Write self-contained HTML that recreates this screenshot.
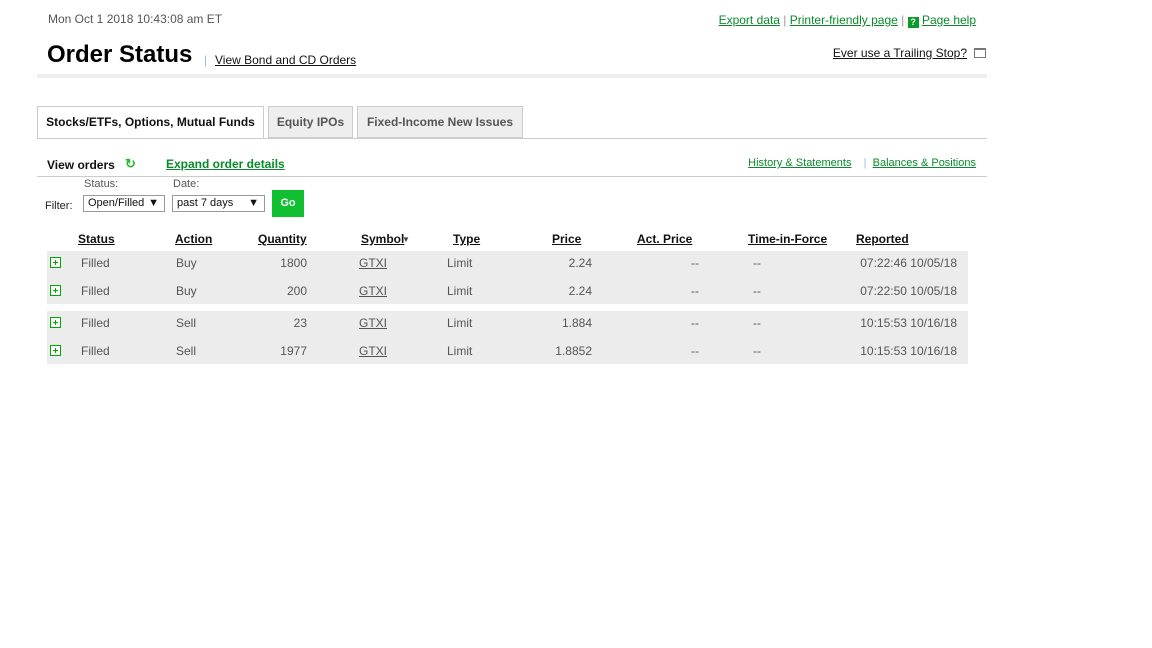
<!DOCTYPE html>
<html><head><meta charset="utf-8"><style>
body{margin:0;width:1152px;height:648px;background:#fff;font-family:"Liberation Sans",Arial,sans-serif;font-size:12px;color:#333;position:relative;overflow:hidden}
.a{position:absolute;white-space:nowrap}
.g{color:#0a8a2a;text-decoration:underline}
.k{color:#111;text-decoration:underline}
.h{color:#111;text-decoration:underline;font-weight:bold;font-size:12px}
.r{text-align:right}
.c{color:#555}
.tab{position:absolute;top:106px;height:32px;box-sizing:border-box;border:1px solid #ccc;font-weight:bold;font-size:12px;line-height:30px;text-align:center}
.plus{position:absolute;left:50px;width:9px;height:9px;border:1px solid #0a0;background:#fff}
.plus:before{content:"";position:absolute;left:2px;top:4px;width:5px;height:1px;background:#0a0}
.plus:after{content:"";position:absolute;left:4px;top:2px;width:1px;height:5px;background:#0a0}
.sel{position:absolute;top:195px;height:15px;border:1px solid #999;font-size:11px;line-height:15px;padding-left:4px;box-sizing:content-box;color:#111}
</style></head><body>
<div class="a c" style="left:48px;top:12px;font-size:12px">Mon Oct 1 2018 10:43:08 am ET</div>
<div class="a" style="right:176px;top:13px;font-size:12px;color:#999"><span class="g">Export data</span> | <span class="g">Printer-friendly page</span> | <span style="display:inline-block;width:11px;height:11px;background:#0a9a2a;color:#fff;font-size:9px;font-weight:bold;text-align:center;line-height:11px;vertical-align:-1px">?</span> <span class="g">Page help</span></div>
<div class="a" style="left:47px;top:41px;font-size:24px;font-weight:bold;color:#000">Order Status</div>
<div class="a" style="left:204px;top:53px;color:#9bd"><span>|</span></div>
<div class="a k" style="left:215px;top:53px">View Bond and CD Orders</div>
<div class="a k" style="right:185px;top:46px">Ever use a Trailing Stop?</div>
<div class="a" style="left:974px;top:48px;width:10px;height:7px;border:1px solid #777;border-top-width:2px"></div>
<div class="a" style="left:37px;top:74px;width:950px;height:4px;background:#eee"></div>

<div class="tab" style="left:37px;width:227px;border-bottom:1px solid #fff;background:#fff;color:#111;height:33px">Stocks/ETFs, Options, Mutual Funds</div>
<div class="tab" style="left:268px;width:85px;background:#eee;color:#555">Equity IPOs</div>
<div class="tab" style="left:357px;width:166px;background:#eee;color:#555">Fixed-Income New Issues</div>
<div class="a" style="left:37px;top:138px;width:950px;height:1px;background:#ccc"></div>

<div class="a" style="left:47px;top:158px;font-weight:bold;color:#111;font-size:12px">View orders</div>
<div class="a" style="left:125px;top:156px;color:#2b3;font-weight:bold;font-size:13px">&#x21bb;</div>
<div class="a g" style="left:166px;top:157px;font-weight:bold;font-size:12px">Expand order details</div>
<div class="a" style="right:176px;top:157px;font-size:11px;color:#9bd"><span class="g">History &amp; Statements</span>&nbsp;&nbsp;&nbsp; | &nbsp;<span class="g">Balances &amp; Positions</span></div>
<div class="a" style="left:37px;top:176px;width:950px;height:1px;background:#ccc"></div>

<div class="a c" style="left:84px;top:178px;font-size:11px">Status:</div>
<div class="a c" style="left:173px;top:178px;font-size:11px">Date:</div>
<div class="a" style="left:45px;top:200px;font-size:11px;color:#222">Filter:</div>
<div class="sel" style="left:83px;width:76px">Open/Filled<span style="position:absolute;right:5px">▼</span></div>
<div class="sel" style="left:172px;width:87px">past 7 days<span style="position:absolute;right:5px">▼</span></div>
<div class="a" style="left:272px;top:190px;width:32px;height:27px;background:#10c030;color:#fff;font-weight:bold;font-size:11px;text-align:center;line-height:27px">Go</div>

<div class="a h" style="left:78px;top:232px">Status</div>
<div class="a h" style="left:175px;top:232px">Action</div>
<div class="a h" style="left:258px;top:232px">Quantity</div>
<div class="a h" style="left:361px;top:232px">Symbol</div>
<div class="a" style="left:402px;top:235px;font-size:8px;color:#444">▼</div>
<div class="a h" style="left:453px;top:232px">Type</div>
<div class="a h" style="left:552px;top:232px">Price</div>
<div class="a h" style="left:637px;top:232px">Act. Price</div>
<div class="a h" style="left:748px;top:232px">Time-in-Force</div>
<div class="a h" style="left:856px;top:232px">Reported</div>

<div class="a" style="left:47px;top:251px;width:921px;height:53px;background:#ececec"></div>
<div class="a" style="left:47px;top:311px;width:921px;height:53px;background:#ececec"></div>

<div class="plus" style="top:257px"></div>
<div class="plus" style="top:285px"></div>
<div class="plus" style="top:317px"></div>
<div class="plus" style="top:345px"></div>

<div class="a c" style="left:81px;top:256px">Filled</div>
<div class="a c" style="left:81px;top:284px">Filled</div>
<div class="a c" style="left:81px;top:316px">Filled</div>
<div class="a c" style="left:81px;top:344px">Filled</div>
<div class="a c" style="left:176px;top:256px">Buy</div>
<div class="a c" style="left:176px;top:284px">Buy</div>
<div class="a c" style="left:176px;top:316px">Sell</div>
<div class="a c" style="left:176px;top:344px">Sell</div>
<div class="a c r" style="right:845px;top:256px">1800</div>
<div class="a c r" style="right:845px;top:284px">200</div>
<div class="a c r" style="right:845px;top:316px">23</div>
<div class="a c r" style="right:845px;top:344px">1977</div>
<div class="a c" style="left:359px;top:256px;text-decoration:underline">GTXI</div>
<div class="a c" style="left:359px;top:284px;text-decoration:underline">GTXI</div>
<div class="a c" style="left:359px;top:316px;text-decoration:underline">GTXI</div>
<div class="a c" style="left:359px;top:344px;text-decoration:underline">GTXI</div>
<div class="a c" style="left:447px;top:256px">Limit</div>
<div class="a c" style="left:447px;top:284px">Limit</div>
<div class="a c" style="left:447px;top:316px">Limit</div>
<div class="a c" style="left:447px;top:344px">Limit</div>
<div class="a c r" style="right:560px;top:256px">2.24</div>
<div class="a c r" style="right:560px;top:284px">2.24</div>
<div class="a c r" style="right:560px;top:316px">1.884</div>
<div class="a c r" style="right:560px;top:344px">1.8852</div>
<div class="a c" style="left:691px;top:256px">--</div>
<div class="a c" style="left:691px;top:284px">--</div>
<div class="a c" style="left:691px;top:316px">--</div>
<div class="a c" style="left:691px;top:344px">--</div>
<div class="a c" style="left:753px;top:256px">--</div>
<div class="a c" style="left:753px;top:284px">--</div>
<div class="a c" style="left:753px;top:316px">--</div>
<div class="a c" style="left:753px;top:344px">--</div>
<div class="a c r" style="right:195px;top:256px">07:22:46 10/05/18</div>
<div class="a c r" style="right:195px;top:284px">07:22:50 10/05/18</div>
<div class="a c r" style="right:195px;top:316px">10:15:53 10/16/18</div>
<div class="a c r" style="right:195px;top:344px">10:15:53 10/16/18</div>
</body></html>
